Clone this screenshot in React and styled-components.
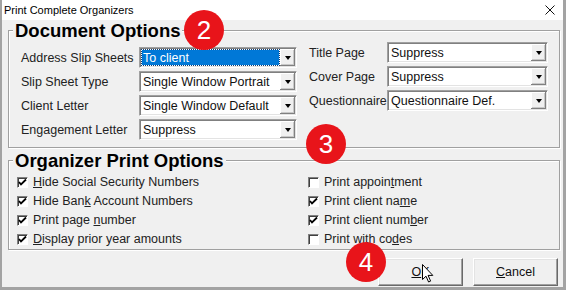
import React from 'react'
import styled, { createGlobalStyle } from 'styled-components'

const leftRows = [
    { label: 'Address Slip Sheets', value: 'To client', selected: true },
    { label: 'Slip Sheet Type', value: 'Single Window Portrait' },
    { label: 'Client Letter', value: 'Single Window Default' },
    { label: 'Engagement Letter', value: 'Suppress' },
]

const rightRows = [
    { label: 'Title Page', value: 'Suppress' },
    { label: 'Cover Page', value: 'Suppress' },
    { label: 'Questionnaire', value: 'Questionnaire Def.' },
]

// text split around the underlined accelerator letter
const leftChecks = [
    { pre: '', key: 'H', post: 'ide Social Security Numbers', checked: true },
    { pre: 'Hide Ban', key: 'k', post: ' Account Numbers', checked: true },
    { pre: 'Print page ', key: 'n', post: 'umber', checked: true },
    { pre: '', key: 'D', post: 'isplay prior year amounts', checked: true },
]

const rightChecks = [
    { pre: 'Print appoin', key: 't', post: 'ment', checked: false },
    { pre: 'Print client na', key: 'm', post: 'e', checked: true },
    { pre: 'Print client num', key: 'b', post: 'er', checked: true },
    { pre: 'Print with co', key: 'd', post: 'es', checked: false },
]

const ComboBox = ({ value, width, selected }) => (
    <Combo $width={width}>
        <ComboText $selected={selected}>{value}</ComboText>
        <DropButton><Arrow /></DropButton>
    </Combo>
)

const CheckItem = ({ pre, hot, post, checked }) => (
    <CheckRow>
        <Box>
            {checked && (
                <svg width="9" height="9" viewBox="0 0 9 9">
                    <path d="M1 4 L3 6.5 L8 1.5" stroke="#000" strokeWidth="1.8" fill="none" />
                </svg>
            )}
        </Box>
        <span>{pre}<u>{hot}</u>{post}</span>
    </CheckRow>
)

const App = () => {
    return (
        <>
            <GlobalStyle />
            <Window>
                <TitleBar>
                    <span>Print Complete Organizers</span>
                    <Close>
                        <svg width="10" height="10" viewBox="0 0 10 10">
                            <path d="M0.5 0.5 L9.5 9.5 M9.5 0.5 L0.5 9.5" stroke="#111" strokeWidth="1" />
                        </svg>
                    </Close>
                </TitleBar>
                <Body>
                    <Group>
                        <Legend>Document Options</Legend>
                        <DocGrid>
                            <Column $offset={5}>
                                {leftRows.map(r => (
                                    <FieldRow key={r.label}>
                                        <Label $width={118}>{r.label}</Label>
                                        <ComboBox value={r.value} width={158} selected={r.selected} />
                                    </FieldRow>
                                ))}
                            </Column>
                            <Column $offset={0}>
                                {rightRows.map(r => (
                                    <FieldRow key={r.label}>
                                        <Label $width={78}>{r.label}</Label>
                                        <ComboBox value={r.value} width={161} />
                                    </FieldRow>
                                ))}
                            </Column>
                        </DocGrid>
                    </Group>
                    <Group $top={2}>
                        <Legend>Organizer Print Options</Legend>
                        <CheckGrid>
                            {leftChecks.map(c => (
                                <CheckItem key={c.pre + c.post} pre={c.pre} hot={c.key} post={c.post} checked={c.checked} />
                            ))}
                            {rightChecks.map(c => (
                                <CheckItem key={c.pre + c.post} pre={c.pre} hot={c.key} post={c.post} checked={c.checked} />
                            ))}
                        </CheckGrid>
                    </Group>
                    <ButtonRow>
                        <Button><u>O</u>K</Button>
                        <Button><u>C</u>ancel</Button>
                    </ButtonRow>
                </Body>

                <Badge $x={182} $y={10}>2</Badge>
                <Badge $x={304} $y={124}>3</Badge>
                <Badge $x={344} $y={242}>4</Badge>
                <Cursor width="12" height="19" viewBox="0 0 12 19">
                    <path d="M0.5 0.5 L0.5 15.5 L4 12.2 L6.6 18 L8.6 17.1 L6.1 11.4 L10.8 11.4 Z" fill="#fff" stroke="#000" strokeWidth="1" strokeLinejoin="round" />
                </Cursor>
            </Window>
        </>
    )
}

export default App


const GlobalStyle = createGlobalStyle`
    html, body {
        margin: 0;
        padding: 0;
        background: #f0f0f0;
    }
    body {
        font-family: "Liberation Sans", Arial, sans-serif;
    }
`

const Window = styled.div`
    position: relative;
    width: 566px;
    height: 290px;
    box-sizing: border-box;
    border-left: 2px solid #a3a3a3;
    border-right: 3px solid #a3a3a3;
    border-bottom: 3px solid #a3a3a3;
    background: #f0f0f0;
    display: flex;
    flex-direction: column;
    overflow: hidden;
`

const TitleBar = styled.div`
    height: 20px;
    flex: none;
    background: #fff;
    display: flex;
    align-items: center;
    padding-left: 2px;
    font-size: 11px;
    color: #000;
`

const Close = styled.span`
    margin-left: auto;
    margin-right: 8px;
    display: flex;
`

const Body = styled.div`
    flex: 1;
    display: flex;
    flex-direction: column;
    padding: 0 3px 0 6px;
`

const Group = styled.fieldset`
    margin: ${p => p.$top || 0}px 0 0;
    padding: 0;
    min-width: 0;
    border: 1px solid #a0a0a0;
    box-shadow: inset 1px 1px 0 #fff, 1px 1px 0 #fff;
`

const Legend = styled.legend`
    margin-left: 4px;
    padding: 2px 2px 0;
    background: #f0f0f0;
    font-size: 18.5px;
    line-height: 18px;
    font-weight: bold;
    color: #000;
`

const DocGrid = styled.div`
    display: flex;
    gap: 12px;
    padding: 2px 11px 7px 12px;
    align-items: flex-start;
`

const Column = styled.div`
    display: flex;
    flex-direction: column;
    gap: 3px;
    margin-top: ${p => p.$offset}px;
`

const FieldRow = styled.div`
    display: flex;
    align-items: center;
    height: 21px;
`

const Label = styled.span`
    width: ${p => p.$width}px;
    font-size: 12.5px;
    color: #222;
    white-space: nowrap;
`

const Combo = styled.div`
    width: ${p => p.$width}px;
    height: 21px;
    box-sizing: border-box;
    display: flex;
    background: #fff;
    border: 1px solid;
    border-color: #a0a0a0 #fff #fff #a0a0a0;
    box-shadow: inset 1px 1px 0 #808080, inset -1px -1px 0 #e3e3e3;
    padding: 1px;
`

const ComboText = styled.div`
    flex: 1;
    display: flex;
    align-items: center;
    margin: 1px;
    padding-left: 1px;
    font-size: 12.5px;
    white-space: nowrap;
    overflow: hidden;
    color: ${p => p.$selected ? '#fff' : '#111'};
    background: ${p => p.$selected ? '#0078d7' : 'transparent'};
    outline: ${p => p.$selected ? '1px dotted #0a3f7a' : 'none'};
`

const DropButton = styled.div`
    width: 15px;
    flex: none;
    display: flex;
    align-items: center;
    justify-content: center;
    background: #f0f0f0;
    box-shadow: inset -1px -1px 0 #808080, inset 1px 1px 0 #fff, inset -2px -2px 0 #c8c8c8;
`

const Arrow = styled.span`
    width: 0;
    height: 0;
    border-left: 3.5px solid transparent;
    border-right: 3.5px solid transparent;
    border-top: 4px solid #000;
    margin-top: 1px;
`

const CheckGrid = styled.div`
    display: grid;
    grid-template-columns: 291px 1fr;
    grid-template-rows: repeat(4, 19px);
    grid-auto-flow: column;
    padding: 2.5px 0 0 8px;
`

const CheckRow = styled.div`
    display: flex;
    align-items: center;
    gap: 5px;
    font-size: 12.5px;
    color: #222;
    white-space: nowrap;
`

const Box = styled.span`
    width: 11px;
    height: 11px;
    flex: none;
    box-sizing: border-box;
    display: flex;
    align-items: center;
    justify-content: center;
    background: #fff;
    border: 1px solid;
    border-color: #808080 #fff #fff #808080;
    box-shadow: inset 1px 1px 0 #404040;
`

const ButtonRow = styled.div`
    display: flex;
    justify-content: flex-end;
    gap: 10px;
    margin-top: 8px;
    padding-right: 2px;
`

const Button = styled.button`
    width: 85px;
    height: 28px;
    box-sizing: border-box;
    padding: 0;
    font-family: "Liberation Sans", Arial, sans-serif;
    font-size: 12.5px;
    color: #111;
    background: #f0f0f0;
    border: 1px solid;
    border-color: #fff #696969 #696969 #fff;
    box-shadow: inset -1px -1px 0 #a0a0a0, inset 1px 1px 0 #e3e3e3;
`

const Badge = styled.div`
    position: absolute;
    left: ${p => p.$x}px;
    top: ${p => p.$y}px;
    width: 40px;
    height: 40px;
    border-radius: 50%;
    background: #e8141a;
    color: #fff;
    display: flex;
    align-items: center;
    justify-content: center;
    font-family: "Liberation Sans", Arial, sans-serif;
    font-size: 26px;
    line-height: 1;
`

const Cursor = styled.svg`
    position: absolute;
    left: 420px;
    top: 264px;
`
